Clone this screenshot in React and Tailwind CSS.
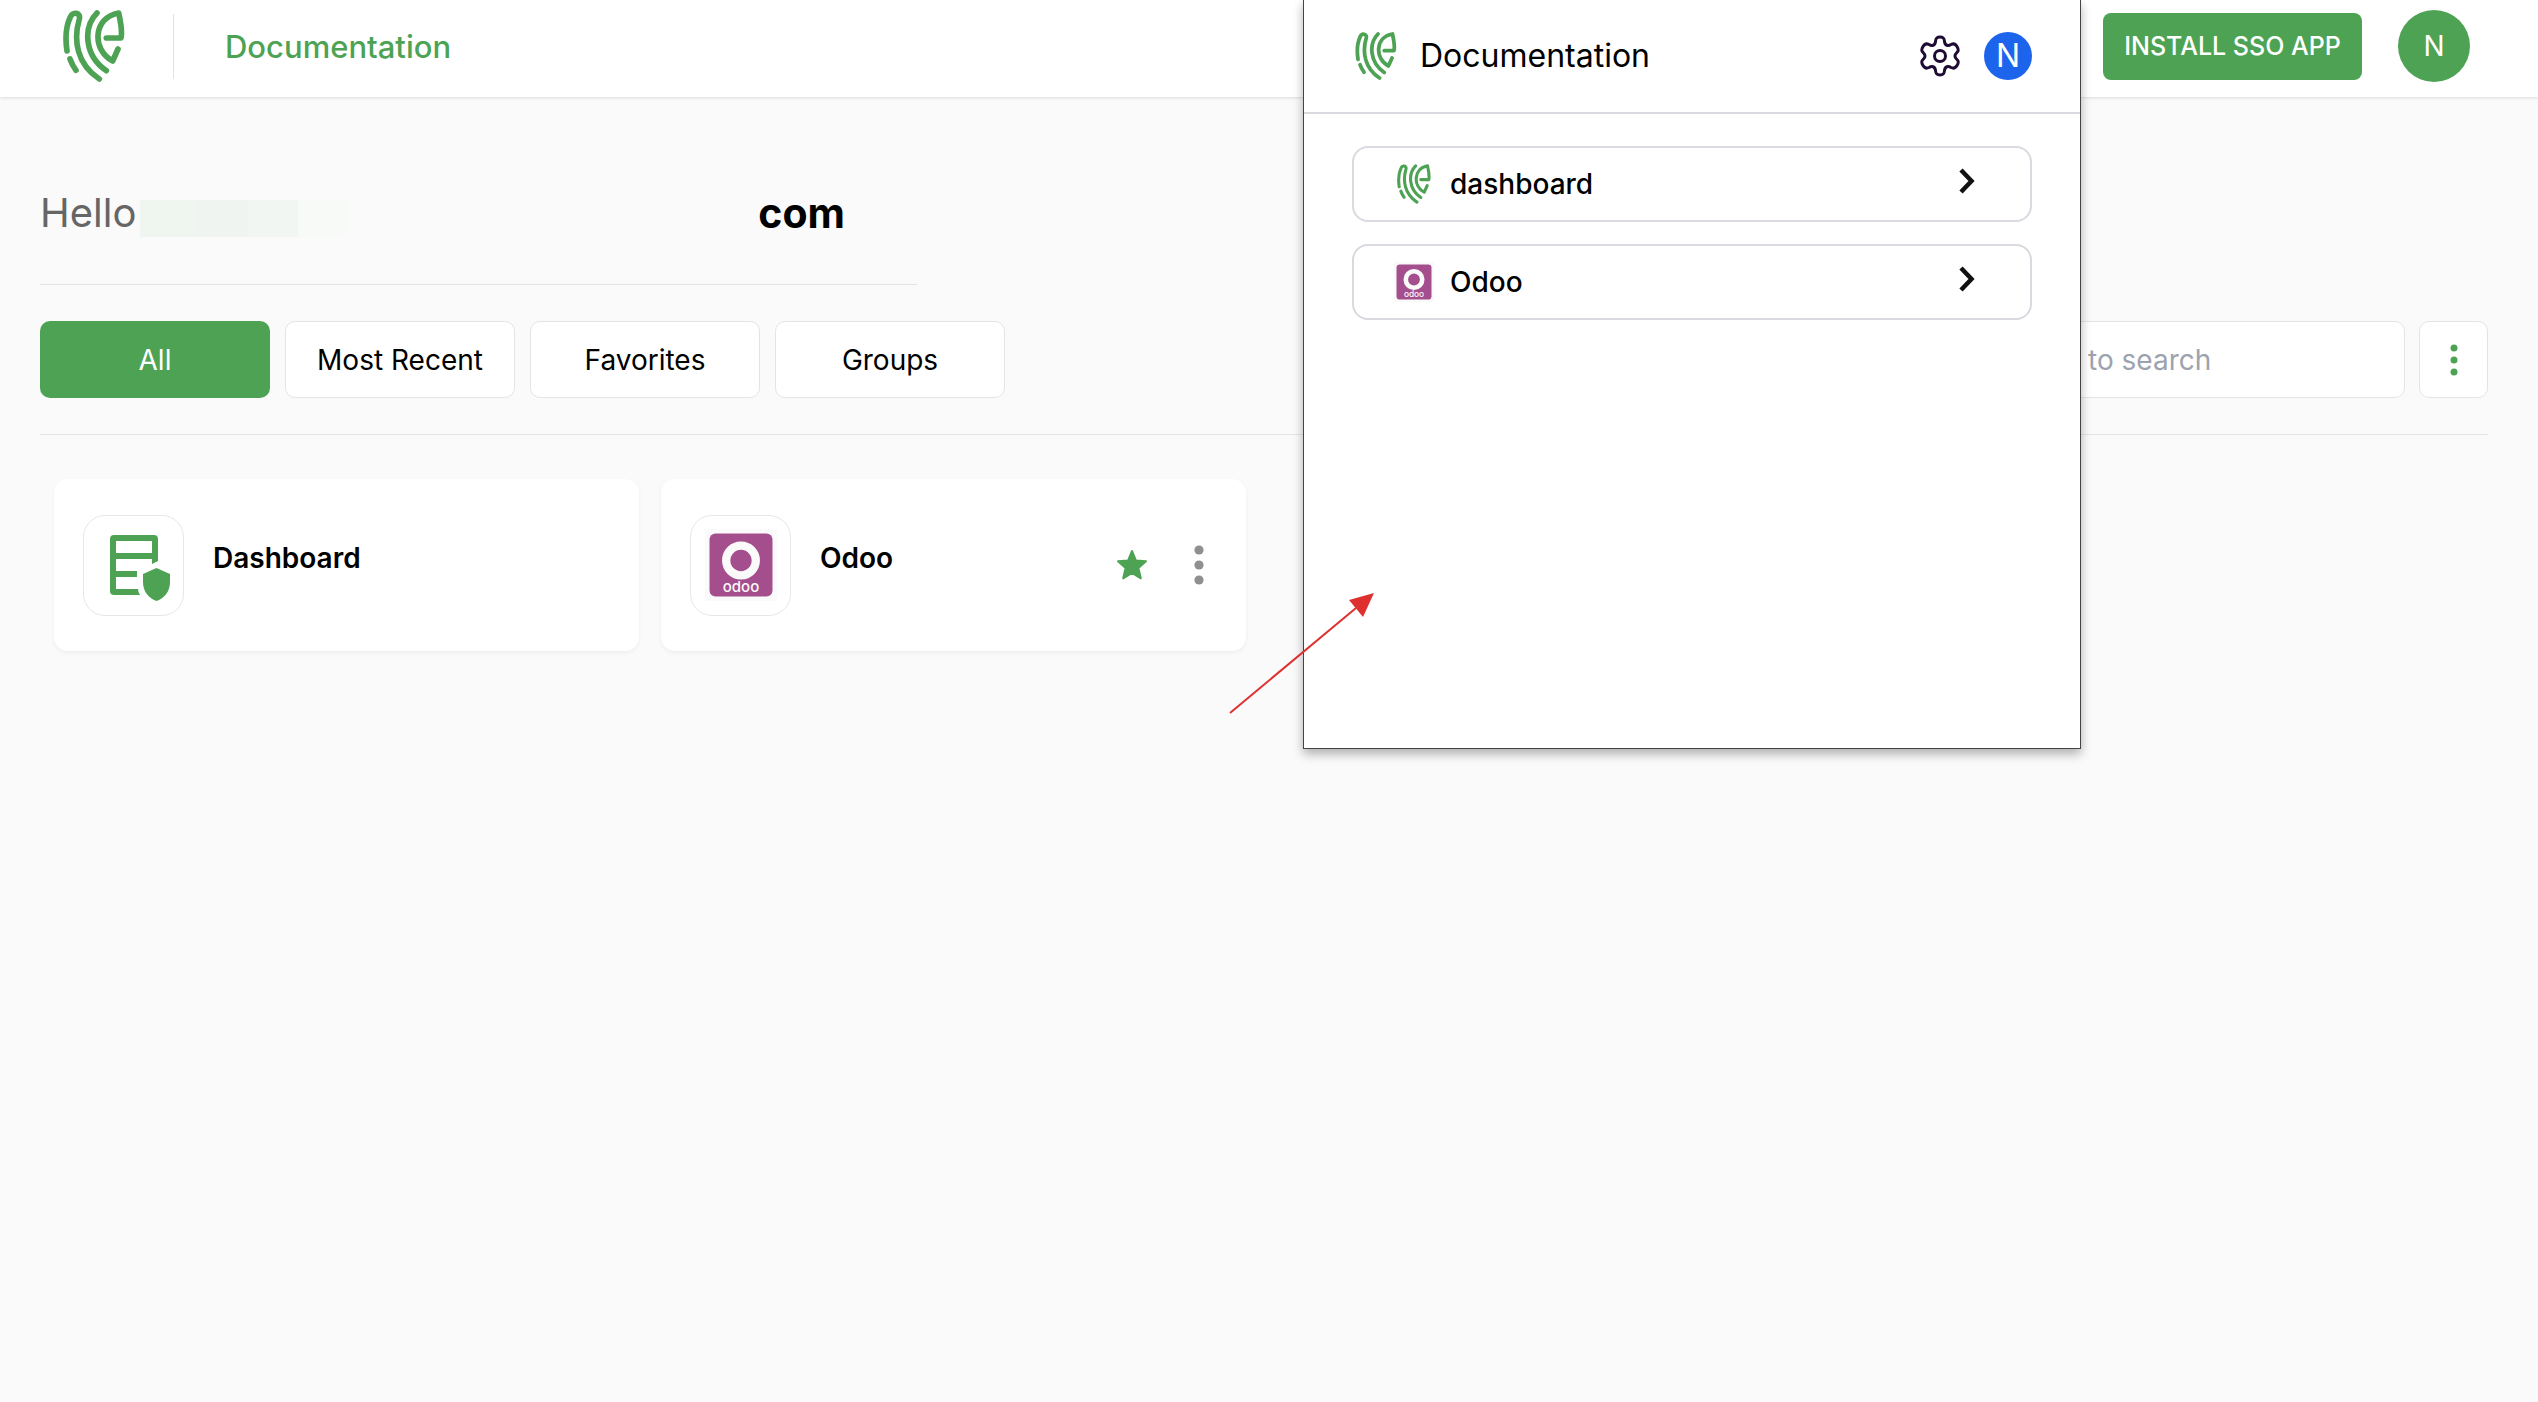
import React, { useState } from 'react'

const tabs = ['All', 'Most Recent', 'Favorites', 'Groups']

function Logo({ className }) {
  return (
    <svg className={className} viewBox="40 29 186 216" fill="none" stroke="#4da353" strokeWidth="17" strokeLinecap="round" strokeLinejoin="round" aria-hidden="true">
      <path d="M52 152 C46 112 50 75 62 50 C69 33 94 36 89 56 C70 120 82 192 149 236" />
      <path d="M142 38 C100 80 103 165 170 211" />
      <path d="M170 113 H214 C218 95 212 60 207 38 C128 52 127 150 189 182 L205 146" />
      <path d="M61 176 Q68 195 79 210" />
    </svg>
  )
}

function OdooIcon({ className }) {
  return (
    <svg className={className} viewBox="0 0 72 72" role="img" aria-label="Odoo">
      <rect width="72" height="72" fill="#fafafa" />
      <rect x="4.500" y="4.500" width="63" height="63" rx="6" fill="#a44e8d" />
      <circle cx="36" cy="31.500" r="14.800" fill="none" stroke="#fafafa" strokeWidth="8.300" />
      <text x="36" y="63" textAnchor="middle" fontSize="15" fontWeight="500" fill="#fafafa">odoo</text>
    </svg>
  )
}

function DashboardIcon() {
  return (
    <svg className="h-[66px] w-[60px]" viewBox="0 0 60 66" fill="#4da353" aria-hidden="true">
      <path fillRule="evenodd" d="M4 0 H44 Q48 0 48 4 V26 L42 29 V24 H6 V36 H27 V42 H6 V54 H28 Q28 57 30 60 H4 Q0 60 0 56 V4 Q0 0 4 0 Z M6 6 V18 H42 V6 Z" />
      <path d="M46.500 33 L60 39 V47 C60 56 55 63 46.500 66 C38 63 33 56 33 47 V39 Z" />
    </svg>
  )
}

function Star() {
  return (
    <svg className="size-8" viewBox="0 0 24 24" fill="#4da353" stroke="#4da353" strokeWidth="1.500" strokeLinejoin="round" aria-hidden="true">
      <path d="M12 1.500 L14.900 8.600 L22.500 9.200 L16.800 14.200 L18.600 22 L12 17.900 L5.400 22 L7.200 14.200 L1.500 9.200 L9.100 8.600 Z" />
    </svg>
  )
}

function Gear() {
  return (
    <svg className="h-[42px] w-10" viewBox="0 0 40 42" fill="none" stroke="#1f0b33" strokeWidth="3" strokeLinejoin="round" aria-hidden="true">
      <path d="M20 2 C24 2 24.300 4 24.500 6.500 C25 10.500 28 11.500 31 9.500 C34 8 35.500 9 37 11.500 C39 15 38.500 16 36.500 18 C34.500 20 34.500 22 36.500 24 C38.500 26 39 27 37 30.500 C35.500 33 34 34 31 32.500 C28 30.500 25 31.500 24.500 35.500 C24.300 38 24 40 20 40 C16 40 15.700 38 15.500 35.500 C15 31.500 12 30.500 9 32.500 C6 34 4.500 33 3 30.500 C1 27 1.500 26 3.500 24 C5.500 22 5.500 20 3.500 18 C1.500 16 1 15 3 11.500 C4.500 9 6 8 9 9.500 C12 11.500 15 10.500 15.500 6.500 C15.700 4 16 2 20 2 Z" />
      <circle cx="20" cy="21" r="5.500" />
    </svg>
  )
}

function Chevron() {
  return (
    <svg className="mb-[6px] h-[26px] w-4" viewBox="0 0 16 26" fill="none" stroke="#111" strokeWidth="4.500" aria-hidden="true">
      <path d="M2 2 L12.500 13 L2 24" />
    </svg>
  )
}

function AppCard({ name, icon, favorite }) {
  return (
    <article className="flex h-[172px] w-[585px] items-center rounded-[14px] bg-white pl-[29px] pr-[33px] shadow-[0_2px_4px_rgba(0,0,0,0.05)]">
      <div className="flex size-[101px] items-center justify-center rounded-[22px] border border-[#e5e7eb] bg-white">{icon}</div>
      <h2 className="mb-[14px] ml-[29px] text-[28px] leading-9 font-semibold text-black">{name}</h2>
      {favorite && (
        <div className="ml-auto flex items-center gap-[37px]">
          <button aria-label={`Remove ${name} from favorites`}><Star /></button>
          <button className="flex w-7 justify-center" aria-label={`${name} options`}>
            <svg className="h-10 w-[10px]" viewBox="0 0 10 40" fill="#8f8f8f">
              <circle cx="5" cy="5" r="4.600" />
              <circle cx="5" cy="20" r="4.600" />
              <circle cx="5" cy="35" r="4.600" />
            </svg>
          </button>
        </div>
      )}
    </article>
  )
}

function PopupItem({ name, icon }) {
  return (
    <button className="flex h-[76px] w-full items-center rounded-2xl border-2 border-[#d9d9df] bg-white pl-10 pr-[55px]">
      <span className="flex w-10 justify-center">{icon}</span>
      <span className="ml-4 text-[28px] leading-9 font-medium text-black">{name}</span>
      <span className="ml-auto"><Chevron /></span>
    </button>
  )
}

function ExtensionPopup() {
  return (
    <aside className="absolute top-0 right-[457px] h-[749px] w-[778px] border border-t-0 border-[#444] bg-white shadow-[0_5px_10px_rgba(0,0,0,0.3)]">
      <div className="flex h-[114px] items-center border-b-2 border-[#d9d9df] pl-[51px] pr-12">
        <Logo className="h-12 w-[42px]" />
        <span className="ml-[23px] text-[32px] leading-10 text-black">Documentation</span>
        <button className="ml-auto" aria-label="Settings"><Gear /></button>
        <button className="ml-6 size-12 rounded-full bg-[#1d64ec] text-[32px] leading-none text-white">N</button>
      </div>
      <div className="flex flex-col gap-[22px] px-12 pt-8">
        <PopupItem name="dashboard" icon={<Logo className="h-10 w-[34px]" />} />
        <PopupItem name="Odoo" icon={<OdooIcon className="size-10" />} />
      </div>
    </aside>
  )
}

export default function App() {
  const [tab, setTab] = useState('All')
  const [query, setQuery] = useState('')

  return (
    <div className="relative min-h-screen overflow-hidden bg-[#fafafa] font-[Inter,sans-serif]">
      <header className="flex h-[97px] items-start bg-white pt-[10px] pl-[63px] pr-[68px] shadow-[0_1px_3px_rgba(0,0,0,0.12)]">
        <Logo className="h-[72px] w-[62px]" />
        <div className="mt-1 ml-12 h-[65px] w-px bg-[#e2e2e4]" />
        <h1 className="mt-[17px] ml-[51px] text-[31px] leading-10 font-medium text-[#4da353]">Documentation</h1>
        <button className="mt-[3px] ml-auto h-[67px] w-[259px] rounded-lg bg-[#4da353] text-[25px] font-medium text-white">INSTALL SSO APP</button>
        <button className="ml-9 size-[72px] rounded-full bg-[#4da353] text-[28px] text-white">N</button>
      </header>

      <main className="pl-10 pr-[50px] pt-[86px]">
        <div className="flex h-[102px] w-[877px] items-start border-b border-[#e4e4e6]">
          <p className="flex items-center text-[40px] leading-[60px] text-[#666]">
            <span>Hello</span>
            <span className="ml-1 mt-[10px] flex h-[37px]">
              <span className="w-[54px] bg-[#eff5ef]" />
              <span className="w-[54px] bg-[#eff4f1]" />
              <span className="w-[50px] bg-[#f1f6f3]" />
              <span className="w-12 bg-[#f8faf8]" />
            </span>
          </p>
          <strong className="ml-auto pr-[72px] text-[41px] leading-[60px] font-bold text-black">com</strong>
        </div>

        <div className="flex items-center border-b border-[#e4e4e6] py-9">
          <nav className="flex gap-[15px]">
            {tabs.map(t => (
              <button
                key={t}
                onClick={() => setTab(t)}
                className={t === tab
                  ? 'h-[77px] w-[230px] rounded-[10px] bg-[#4da353] text-[28px] text-white'
                  : 'h-[77px] w-[230px] rounded-[10px] border border-[#e4e4e6] bg-white text-[28px] text-black'}
              >
                {t}
              </button>
            ))}
          </nav>
          <input
            type="text"
            aria-label="Search apps"
            placeholder="to search"
            value={query}
            onChange={e => setQuery(e.target.value)}
            className="ml-auto h-[77px] w-[340px] rounded-[10px] border border-[#e4e4e6] bg-white px-[22px] text-[28px] text-black placeholder:text-[#9ca3af]"
          />
          <button className="ml-[14px] flex h-[77px] w-[69px] items-center justify-center rounded-[10px] border border-[#e4e4e6] bg-white" aria-label="More options">
            <svg className="h-8 w-2" viewBox="0 0 8 32" fill="#4da353">
              <circle cx="4" cy="4" r="3.500" />
              <circle cx="4" cy="16" r="3.500" />
              <circle cx="4" cy="28" r="3.500" />
            </svg>
          </button>
        </div>

        <section className="flex flex-wrap gap-[22px] px-[14px] pt-11">
          <AppCard name="Dashboard" icon={<div className="mt-[5px] ml-[13px]"><DashboardIcon /></div>} />
          <AppCard name="Odoo" favorite icon={<OdooIcon className="size-[72px]" />} />
        </section>
      </main>

      <ExtensionPopup />

      {/* pointer to the extension popup */}
      <svg className="pointer-events-none absolute top-[590px] right-[1162px] h-[126px] w-[148px]" viewBox="0 0 148 126" aria-hidden="true">
        <path d="M2 123 L128 18" stroke="#df3030" strokeWidth="2" />
        <path d="M146 3 L121 10 L135 27 Z" fill="#df3030" />
      </svg>
    </div>
  )
}
